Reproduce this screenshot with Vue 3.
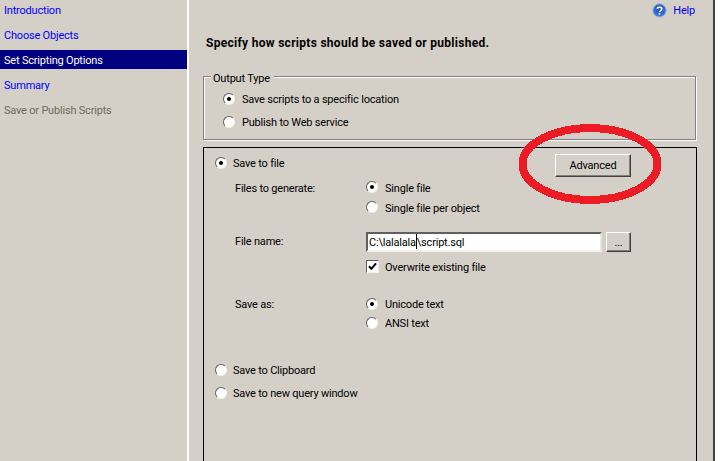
<script setup>
const steps = [
  { label: 'Introduction', kind: 'link' },
  { label: 'Choose Objects', kind: 'link' },
  { label: 'Set Scripting Options', kind: 'active' },
  { label: 'Summary', kind: 'link' },
  { label: 'Save or Publish Scripts', kind: 'off' }
]
</script>

<template>
  <div class="window">
    <nav class="side">
      <div v-for="s in steps" :key="s.label" class="step" :class="s.kind">{{ s.label }}</div>
    </nav>
    <main class="main">
      <div class="help">
        <svg width="15" height="15" viewBox="0 0 15 15">
          <defs>
            <radialGradient id="hg" cx="0.5" cy="0.45" r="0.6">
              <stop offset="0" stop-color="#1d4fc0" />
              <stop offset="0.7" stop-color="#3a6fd2" />
              <stop offset="1" stop-color="#9dbcee" />
            </radialGradient>
          </defs>
          <circle cx="7.500" cy="7.500" r="6.800" fill="url(#hg)" stroke="#a9b9d6" stroke-width="0.800" />
          <path d="M5.200 5.800C5.400 3.900 9.800 3.800 9.800 6C9.800 7.600 7.500 7.500 7.500 9.200" fill="none" stroke="#fff" stroke-width="1.500" />
          <rect x="6.700" y="10.200" width="1.600" height="1.600" fill="#fff" />
        </svg>
        <span>Help</span>
      </div>
      <h1 class="title">Specify how scripts should be saved or published.</h1>

      <div class="group">
        <span class="legend">Output Type</span>
        <div class="opt"><i class="radio on"></i>Save scripts to a specific location</div>
        <div class="opt"><i class="radio"></i>Publish to Web service</div>
      </div>

      <section class="panel">
        <div class="top-row">
          <div class="opt tight"><i class="radio on"></i>Save to file</div>
          <button class="btn adv">Advanced</button>
        </div>

        <div class="form">
          <div class="lbl">Files to generate:</div>
          <div class="stack">
            <div class="opt"><i class="radio on"></i>Single file</div>
            <div class="opt"><i class="radio"></i>Single file per object</div>
          </div>

          <div class="lbl fname">File name:</div>
          <div class="file-col">
            <div class="file-row">
              <div class="input">C:\lalalala<b class="caret"></b>\script.sql</div>
              <button class="btn dots">...</button>
            </div>
            <div class="opt check-row">
              <i class="check">
                <svg width="9" height="9" viewBox="0 0 9 9"><path d="M1 4.200L3.400 6.800L8 1.400" fill="none" stroke="#000" stroke-width="2" /></svg>
              </i>Overwrite existing file
            </div>
          </div>

          <div class="lbl saveas">Save as:</div>
          <div class="stack saveas-col">
            <div class="opt"><i class="radio on"></i>Unicode text</div>
            <div class="opt"><i class="radio"></i>ANSI text</div>
          </div>
        </div>

        <div class="bottom">
          <div class="opt tight"><i class="radio"></i>Save to Clipboard</div>
          <div class="opt tight"><i class="radio"></i>Save to new query window</div>
        </div>
      </section>

      <svg class="ring" width="150" height="90" viewBox="0 0 150 90" shape-rendering="crispEdges">
        <ellipse cx="72" cy="44" rx="67.500" ry="36" fill="none" stroke="#ed1c24" stroke-width="8" />
      </svg>
    </main>
  </div>
</template>

<style scoped>
.window {
  display: flex;
  width: 715px;
  height: 461px;
  overflow: hidden;
  background: #d4d0c8;
  font-family: Roboto, "Liberation Sans", Arial, sans-serif;
  font-size: 11px;
  letter-spacing: -0.2px;
  color: #000;
}
.side {
  width: 187px;
  flex: none;
  border-right: 2px solid #fff;
}
.step {
  height: 19px;
  line-height: 22px;
  margin-bottom: 6px;
  padding-left: 4px;
  color: #0000ff;
}
.step.active { background: #000080; color: #fff; }
.step.off { color: #6f6a5c; }
.main {
  position: relative;
  flex: 1;
  padding: 0 16px 0 14px;
  border-right: 2px solid #404040;
}
.help {
  display: flex;
  align-items: center;
  justify-content: flex-end;
  gap: 6px;
  height: 20px;
  margin-right: 2px;
  color: #0000ff;
}
.title {
  margin: 17px 0 0;
  font-size: 12px;
  font-weight: 700;
  letter-spacing: 0.29px;
  line-height: 13px;
  padding-left: 3px;
}
.group {
  position: relative;
  height: 64px;
  margin: 26px 1px 0 0;
  padding: 10px 0 0 19px;
  box-sizing: border-box;
  border: 1px solid #808080;
  box-shadow: 1px 1px 0 #fff, inset 1px 1px 0 #fff;
}
.legend {
  position: absolute;
  top: -6px;
  left: 7px;
  padding: 0 4px 0 2px;
  background: #d4d0c8;
  line-height: 16px;
}
.opt {
  display: flex;
  align-items: center;
  height: 23px;
  padding-top: 2px;
  box-sizing: border-box;
}
.radio {
  position: relative;
  width: 12px;
  height: 12px;
  flex: none;
  margin: -2px 7px 0 0;
  box-sizing: border-box;
  border-radius: 50%;
  background: #fff;
  border: 1px solid;
  border-color: #606060 #f4f2ee #f4f2ee #606060;
}
.tight .radio { margin-right: 6px; }
.radio.on::after {
  content: "";
  position: absolute;
  left: 3px;
  top: 3px;
  width: 4px;
  height: 4px;
  border-radius: 50%;
  background: #000;
}
.panel {
  position: relative;
  height: 320px;
  margin-top: 7px;
  padding: 3px 0 0 11px;
  box-sizing: border-box;
  border: 1px solid #000;
}
.top-row {
  display: flex;
  justify-content: space-between;
  align-items: flex-start;
}
.btn {
  box-sizing: border-box;
  font: inherit;
  letter-spacing: inherit;
  color: #000;
  background: #d4d0c8;
  border: 1px solid;
  border-color: #fff #404040 #404040 #fff;
  box-shadow: inset -1px -1px 0 #808080;
  padding: 0;
}
.adv {
  width: 76px;
  height: 23px;
  margin: 3px 65px 0 0;
}
.form {
  display: grid;
  grid-template-columns: 131px 1fr;
  padding-left: 20px;
}
.lbl { line-height: 14px; padding-top: 5px; }
.stack .opt { height: 20px; }
.fname { margin-top: 15px; padding-top: 3px; }
.file-col { margin-top: 15px; }
.file-row { display: flex; gap: 4px; }
.input {
  width: 236px;
  height: 20px;
  box-sizing: border-box;
  padding-left: 1px;
  line-height: 16px;
  background: #fff;
  border: 2px solid;
  border-color: #606060 #e8e6e0 #f4f2ee #606060;
  white-space: nowrap;
}
.caret {
  display: inline-block;
  width: 1px;
  height: 15px;
  vertical-align: -3px;
  background: #000;
}
.dots { width: 25px; height: 20px; line-height: 14px; padding-top: 2px; }
.check-row { margin-top: 3px; }
.check {
  display: flex;
  align-items: center;
  justify-content: center;
  width: 13px;
  height: 13px;
  flex: none;
  margin: -2px 6px 0 0;
  box-sizing: border-box;
  background: #fff;
  border: 1px solid;
  border-color: #606060 #f4f2ee #f4f2ee #606060;
}
.saveas { margin-top: 16px; padding-top: 4px; }
.saveas-col { margin-top: 16px; }
.saveas-col .opt { height: 19px; }
.bottom { margin-top: 26px; }
.ring {
  position: absolute;
  left: 329px;
  top: 120px;
  pointer-events: none;
}
</style>

<style>
html, body { margin: 0; background: #fff; }
</style>
